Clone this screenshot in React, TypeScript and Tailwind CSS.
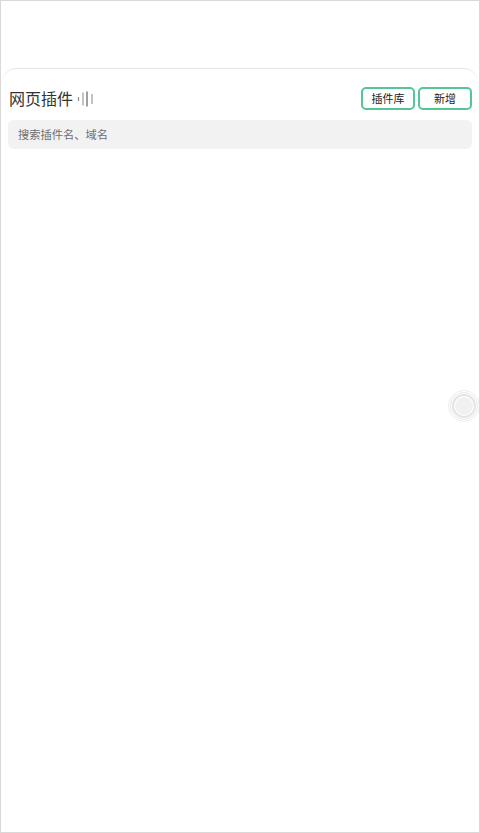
const FONT = 'font-["Noto_Sans_CJK_SC","Liberation_Sans",sans-serif]';

function VoiceBars() {
  return (
    <svg width="16" height="16" viewBox="0 0 16 16" className="ml-[4px]" fill="none">
      <path d="M1.5 6v4" stroke="#8a8a8a" strokeWidth="1.2" />
      <path d="M6 1.5v13" stroke="#999" strokeWidth="1.2" />
      <path d="M10 0.5v15" stroke="#777" strokeWidth="1.4" />
      <path d="M15 3v10" stroke="#999" strokeWidth="1.2" />
    </svg>
  );
}

function OutlineButton({ label }: { label: string }) {
  return (
    <button className="h-[23px] w-[54px] rounded-[5px] border-2 border-[#56c596] bg-white text-[11px] leading-none text-[#222]">
      {label}
    </button>
  );
}

export default function App() {
  return (
    <div className={`${FONT} relative flex h-[833px] w-[480px] flex-col overflow-hidden border border-[#d9d9d9] bg-white`}>
      <div className="mt-[67px] flex flex-1 flex-col rounded-t-[16px] border-t border-[#e6e6e6] px-[7px]">
        <div className="mt-[18px] flex h-[23px] items-center justify-between">
          <div className="flex items-center pl-[1px]">
            <span className="mb-[2px] text-[16px] leading-none text-[#333]">网页插件</span>
            <VoiceBars />
          </div>
          <div className="flex gap-[3px]">
            <OutlineButton label="插件库" />
            <OutlineButton label="新增" />
          </div>
        </div>
        <div className="mt-[10px] flex h-[29px] items-center rounded-[6px] bg-[#f2f2f2] px-[10px] text-[11.25px] text-[#6e6e6e]">
          搜索插件名、域名
        </div>
      </div>
      <div className="absolute left-[447px] top-[389px] flex h-[32px] w-[32px] items-center justify-center rounded-full border border-[#ededed] bg-white">
        <div className="flex h-[28px] w-[28px] items-center justify-center rounded-full border border-[#e8e8e8]">
          <div className="flex h-[24px] w-[24px] items-center justify-center rounded-full border-2 border-[#e4e4e4]">
            <div className="h-[18px] w-[18px] rounded-full bg-[#f1f1f1]" />
          </div>
        </div>
      </div>
    </div>
  );
}
